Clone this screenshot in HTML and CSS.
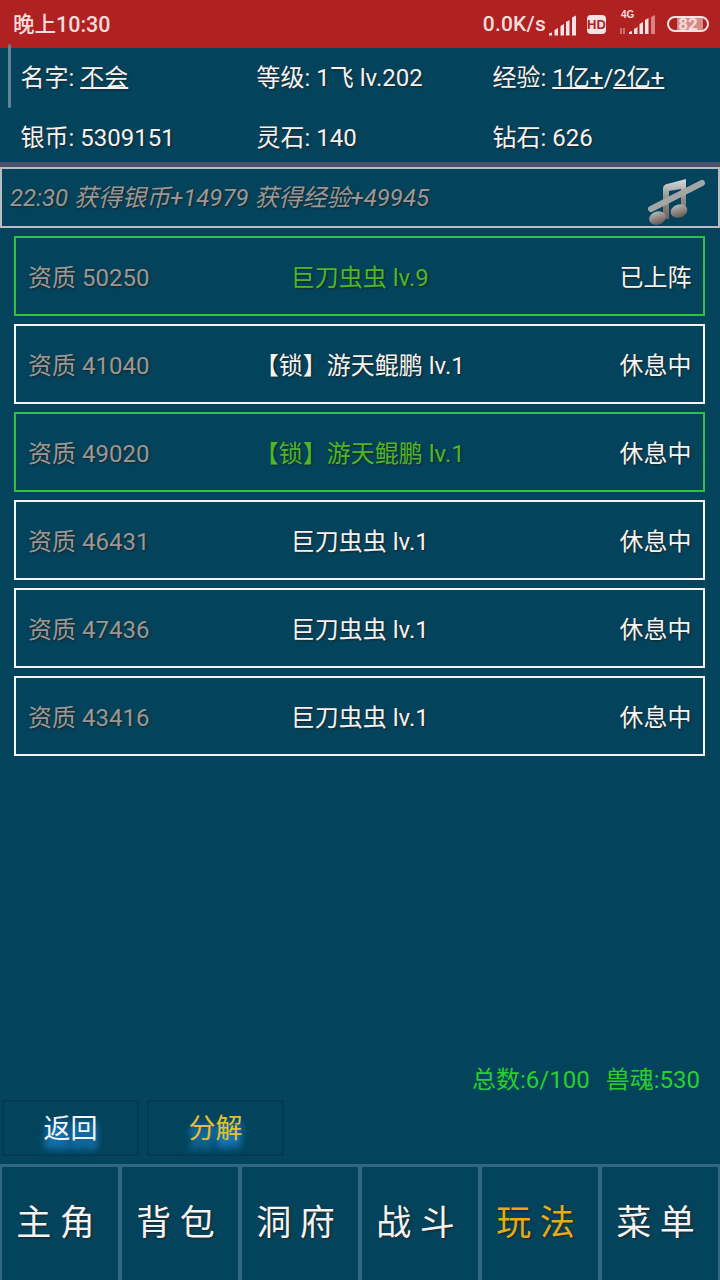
FILE: index.html
```html
<!DOCTYPE html>
<html lang="zh-CN">
<head>
<meta charset="utf-8">
<title>玩法</title>
<link rel="stylesheet" href="styles.css">
</head>
<body>
<div class="app">
  <div class="statusbar">
    <span class="clock">晚上10:30</span>
    <div class="status-right">
      <span class="speed">0.0K/s</span>
      <svg class="sig" width="28" height="21" viewBox="0 0 28 21"><path d="M0 20.500h3v-3l-3 1zM5.500 20.500h3.500V13l-3.500 2zM11.500 20.500h3.500V9l-3.500 2zM17 20.500h3.500V5L17 7zM23 20.500h4V0.500l-4 2z" fill="#f6e2e2"/></svg>
      <span class="hd">HD</span>
      <span class="net"><span class="net-4g">4G</span><svg width="40" height="24" viewBox="0 0 40 24"><path d="M3 16v6M6 22v-6" stroke="#e09a9a" stroke-width="1.300"/><path d="M11 22h3v-3l-3 1zM16 22h3.500v-7l-3.500 2zM21.500 22h3.500V10l-3.500 2zM27 22h3.500V6L27 8z" fill="#f6e2e2"/><path d="M33 22h4V3l-4 2z" fill="#d98080"/></svg></span>
      <span class="battery"><span class="battery-fill"></span><span class="battery-num">82</span></span>
    </div>
  </div>

  <div class="stats">
    <div class="stat">名字: <u>不会</u></div>
    <div class="stat">等级: 1飞 lv.202</div>
    <div class="stat">经验: <u>1亿+</u>/<u>2亿+</u></div>
    <div class="stat">银币: 5309151</div>
    <div class="stat">灵石: 140</div>
    <div class="stat">钻石: 626</div>
    <span class="scrollbar"></span>
  </div>
  <div class="divider"></div>

  <div class="log">
    <span class="log-text">22:30 获得银币+14979 获得经验+49945</span>
    <svg class="music" width="58" height="50" viewBox="0 0 58 50">
      <defs>
        <linearGradient id="metal" x1="0" y1="0" x2="0" y2="1"><stop offset="0" stop-color="#d6dadc"/><stop offset=".5" stop-color="#8f8d8b"/><stop offset="1" stop-color="#6f6460"/></linearGradient>
        <linearGradient id="head" x1="0" y1="0" x2="0" y2="1"><stop offset="0" stop-color="#b4b5b3"/><stop offset="1" stop-color="#6a5a54"/></linearGradient>
      </defs>
      <path d="M15 41V10Q15.500 6 21 5.500L38 1V34H33V11L21 13V41z" fill="url(#metal)"/>
      <ellipse cx="9.500" cy="40" rx="8.500" ry="6.500" fill="url(#head)" transform="rotate(-18 9.500 40)"/>
      <ellipse cx="31" cy="33" rx="8.500" ry="6.500" fill="url(#head)" transform="rotate(-18 31 33)"/>
      <path d="M3 31L54 5" stroke="#a4a6a6" stroke-width="6" stroke-linecap="round"/>
    </svg>
  </div>

  <div class="list">
    <div class="row on"><span class="q">资质 50250</span><span class="name">巨刀虫虫 lv.9</span><span class="state">已上阵</span></div>
    <div class="row"><span class="q">资质 41040</span><span class="name">【锁】游天鲲鹏 lv.1</span><span class="state">休息中</span></div>
    <div class="row on"><span class="q">资质 49020</span><span class="name">【锁】游天鲲鹏 lv.1</span><span class="state">休息中</span></div>
    <div class="row"><span class="q">资质 46431</span><span class="name">巨刀虫虫 lv.1</span><span class="state">休息中</span></div>
    <div class="row"><span class="q">资质 47436</span><span class="name">巨刀虫虫 lv.1</span><span class="state">休息中</span></div>
    <div class="row"><span class="q">资质 43416</span><span class="name">巨刀虫虫 lv.1</span><span class="state">休息中</span></div>
  </div>

  <div class="totals"><span>总数:6/100</span><span>兽魂:530</span></div>

  <div class="actions">
    <div class="btn">返回</div>
    <div class="btn gold">分解</div>
  </div>

  <nav class="nav">
    <div class="tab">主 角</div>
    <div class="tab">背 包</div>
    <div class="tab">洞 府</div>
    <div class="tab">战 斗</div>
    <div class="tab gold">玩 法</div>
    <div class="tab">菜 单</div>
  </nav>
</div>
</body>
</html>
```
FILE: styles.css
```css
* { box-sizing: border-box; }
html, body { margin: 0; padding: 0; }
body { width: 720px; height: 1280px; overflow: hidden; background: #03435c; }
.app {
  width: 720px; height: 1280px; display: flex; flex-direction: column;
  font-family: Roboto, "Noto Sans CJK SC", sans-serif; color: #f4f4f4; font-size: 24px;
}
.statusbar {
  height: 48px; flex: none; background: #b02222; color: #f6dcdc;
  display: flex; align-items: center; justify-content: space-between; padding: 0 11px 0 13px;
}
.clock { font-size: 21.500px; font-weight: 500; padding-bottom: 3px; }
.status-right { display: flex; align-items: center; }
.speed { font-size: 21px; font-weight: 500; letter-spacing: .2px; margin-left: 1px; }
.sig { margin: 2px 10px 0 3px; }
.hd {
  width: 19px; height: 19px; background: #f6e2e2; color: #b02222; border-radius: 4px;
  font: 700 13px/19px "Liberation Sans", sans-serif; text-align: center;
}
.net { position: relative; display: flex; margin-left: 12px; width: 40px; height: 24px; }
.net-4g { position: absolute; left: 3px; top: -3px; font: 700 10px/12px "Liberation Sans", sans-serif; }
.battery {
  position: relative; width: 42px; height: 16px; margin-left: 9px; border: 2px solid #f6e2e2; border-radius: 8px;
  display: flex; align-items: center; justify-content: center;
  font-size: 17px; font-weight: 700; line-height: 12px;
}
.battery-fill { position: absolute; left: 8px; top: 0; bottom: 0; width: 26px; background: #d98a8a; }
.battery-num { position: relative; }
.stats {
  position: relative; height: 114px; flex: none; padding: 0 0 0 20.500px;
  display: grid; grid-template-columns: 236px 236px 1fr; grid-template-rows: 60px 60px;
}
.stat { display: flex; align-items: center; white-space: pre; text-shadow: 1px 1px 2px #222; line-height: 60px; }
.stat u { text-decoration-thickness: 2px; text-underline-offset: 1px; text-decoration-skip-ink: none; }
.scrollbar {
  position: absolute; left: 8px; top: -4px; width: 3px; height: 64px; border-radius: 2px; background: #5f8494;
}
.divider { height: 5px; flex: none; background: #4e4f6e; }
.log {
  height: 61px; flex: none; border: 2px solid #b9bdbf; display: flex; align-items: center;
  padding: 0 0 4px 8px; position: relative;
}
.log-text { font-style: italic; color: #9a9896; text-shadow: 1px 1px 2px #222; }
.music { position: absolute; right: 12px; top: 9px; }
.list { flex: none; padding: 8px 15px 0 14px; display: flex; flex-direction: column; gap: 8px; }
.row {
  height: 80px; border: 2px solid #f4f4f4; display: grid; grid-template-columns: 1fr auto 1fr;
  align-items: center; padding: 0 11.500px 2px 12px; text-shadow: 1px 1px 2px #222;
}
.row.on { border-color: #32c042; }
.q { color: #9a9896; }
.name { white-space: nowrap; }
.row.on .name { color: #4ab828; }
.state { text-align: right; }
.totals {
  margin-top: auto; display: flex; justify-content: flex-end; gap: 16px; padding: 0 20px 0 0;
  color: #28d028; line-height: 32px; margin-bottom: 4px;
}
.actions { flex: none; display: flex; gap: 8px; padding-left: 2px; height: 56px; margin-bottom: 8px; }
.btn {
  width: 137px; border: 2px solid #033a51; text-align: center; font-size: 27px; line-height: 54px;
  text-shadow: 0 7px 7px #1f86d0, 0 9px 9px #1f86d0;
}
.btn.gold { color: #e6c02c; }
.nav { height: 116px; flex: none; display: flex; border-top: 3px solid #32687f; }
.tab {
  width: 120px; border-left: 2px solid #32687f; border-right: 2px solid #32687f; padding-right: 9px;
  text-align: center; font-size: 35px; line-height: 114px;
  text-shadow: 1px 1px 2px #222; white-space: nowrap;
}
.tab.gold { color: #e3ab1e; }
```
